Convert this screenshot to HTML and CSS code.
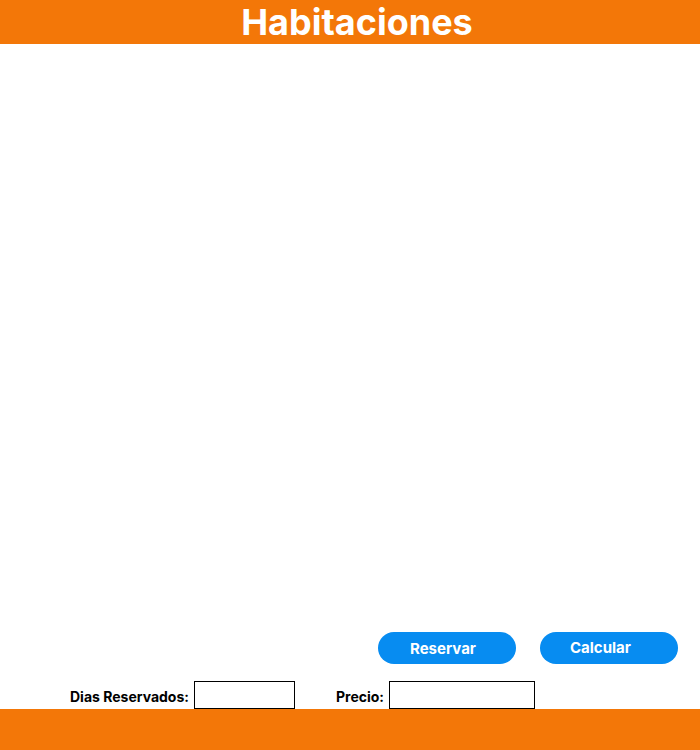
FILE: index.html
```html
<!DOCTYPE html>
<html lang="es">
<head>
<meta charset="utf-8">
<title>Habitaciones</title>
<link rel="stylesheet" href="styles.css">
</head>
<body>
<div class="page">
  <header class="top-bar">
    <h1 class="title">Habitaciones</h1>
  </header>
  <main class="content">
    <div class="actions">
      <button class="btn btn-reservar" type="button">Reservar</button>
      <button class="btn btn-calcular" type="button">Calcular</button>
    </div>
    <div class="fields">
      <label class="field-label" for="dias">Dias Reservados:</label>
      <input class="field-input input-dias" id="dias" type="text">
      <label class="field-label label-precio" for="precio">Precio:</label>
      <input class="field-input input-precio" id="precio" type="text">
    </div>
  </main>
  <footer class="bottom-bar"></footer>
</div>
</body>
</html>
```
FILE: styles.css
```css
html, body {
  margin: 0;
  padding: 0;
  background: #ffffff;
}
body {
  font-family: Inter, "Noto Sans", "Liberation Sans", sans-serif;
}
.page {
  display: flex;
  flex-direction: column;
  height: 750px;
}
.top-bar {
  height: 44px;
  background: #f37708;
  display: flex;
  align-items: center;
  justify-content: center;
  padding-left: 14px;
}
.title {
  margin: 0;
  color: #ffffff;
  font-size: 36px;
  font-weight: 700;
  line-height: 44px;
}
.content {
  flex: 1;
  display: flex;
  flex-direction: column;
  justify-content: flex-end;
}
.actions {
  display: flex;
  justify-content: flex-end;
  gap: 24px;
  padding-right: 22px;
  margin-bottom: 17px;
}
.btn {
  width: 138px;
  height: 32px;
  border: none;
  border-radius: 16px;
  background: #078cf1;
  color: #ffffff;
  font-family: Inter, "Noto Sans", "Liberation Sans", sans-serif;
  font-size: 15px;
  font-weight: 700;
  text-align: left;
  padding: 0 0 0 32px;
}
.btn-reservar {
  padding-top: 1px;
}
.btn-calcular {
  padding-left: 30px;
  padding-bottom: 1px;
}
.fields {
  display: flex;
  align-items: center;
  padding-left: 70px;
  height: 28px;
}
.field-label {
  font-size: 14px;
  font-weight: 700;
  color: #000000;
  margin-right: 5px;
  padding-top: 3px;
}
.field-input {
  box-sizing: border-box;
  height: 28px;
  border: 1px solid #000000;
  border-radius: 0;
  margin: 0;
  padding: 0 4px;
  background: #ffffff;
}
.input-dias {
  width: 101px;
}
.label-precio {
  margin-left: 41px;
}
.input-precio {
  width: 146px;
}
.bottom-bar {
  height: 41px;
  background: #f37708;
}
```
